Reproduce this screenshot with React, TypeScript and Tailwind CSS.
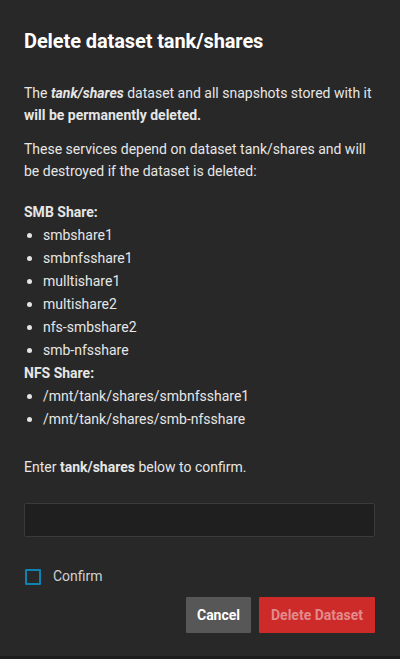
import React from "react";

const smb = ["smbshare1", "smbnfsshare1", "mulltishare1", "multishare2", "nfs-smbshare2", "smb-nfsshare"];
const nfs = ["/mnt/tank/shares/smbnfsshare1", "/mnt/tank/shares/smb-nfsshare"];

function Item({ t }: { t: string }) {
  return (
    <li className="flex items-center h-[23px]">
      <span className="w-[5px] h-[5px] rounded-full bg-[#e4e4e4] ml-[3px] mr-[11px]" />
      <span>{t}</span>
    </li>
  );
}

export default function App() {
  return (
    <div
      className="w-[400px] h-[659px] bg-[#282828] text-[#e6e6e6] flex flex-col border-b-[3px] border-[#1c1c1c]"
      style={{ fontFamily: "Roboto, 'Noto Sans', sans-serif" }}
    >
      <div className="pl-6 pr-[25px] pt-[28px] flex flex-col">
        <h1 className="text-[20px] font-bold leading-[26px] text-white tracking-[-0.1px]">Delete dataset tank/shares</h1>
        <p className="mt-[28px] text-[14px] leading-[22px]">
          The <b className="italic font-bold">tank/shares</b> dataset and all snapshots stored with it{" "}
          <b className="font-bold">will be permanently deleted.</b>
        </p>
        <p className="mt-[12px] text-[14px] leading-[22px]">
          These services depend on dataset tank/shares and will be destroyed if the dataset is deleted:
        </p>
        <div className="mt-[19px] text-[14px]">
          <div className="font-bold h-[23px] leading-[23px]">SMB Share:</div>
          <ul>
            {smb.map((s) => (
              <Item key={s} t={s} />
            ))}
          </ul>
          <div className="font-bold h-[23px] leading-[23px]">NFS Share:</div>
          <ul>
            {nfs.map((s) => (
              <Item key={s} t={s} />
            ))}
          </ul>
        </div>
        <p className="mt-[25px] text-[14px] leading-[22px]">
          Enter <b className="font-bold">tank/shares</b> below to confirm.
        </p>
        <input
          className="mt-[25px] h-[34px] w-full bg-[#1f1f1f] border border-[#3a3a3a] rounded-[2px] outline-none"
          aria-label="confirm"
        />
        <label className="mt-[29px] flex items-center gap-[12px] text-[14px] text-[#d0d0d0]">
          <span className="ml-px w-[16px] h-[16px] border-2 border-[#0f82b4] rounded-[1px]" />
          Confirm
        </label>
        <div className="mt-[10px] flex justify-end gap-[8px]">
          <button className="h-[36px] w-[65px] bg-[#575757] text-white font-bold text-[14px] rounded-[1px]">Cancel</button>
          <button className="h-[36px] w-[116px] bg-[#cd2a2a] text-[#e38a8a] font-bold text-[14px] rounded-[1px]">
            Delete Dataset
          </button>
        </div>
      </div>
    </div>
  );
}
